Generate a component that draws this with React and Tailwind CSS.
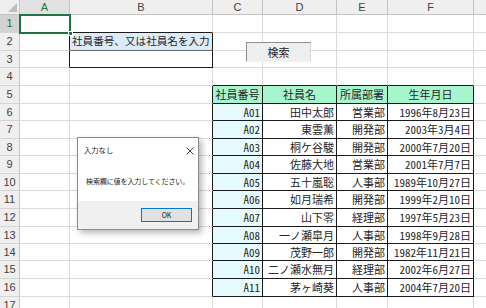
import React from 'react';

const COLS = [
  { key: 'A', w: 'w-[50px]' },
  { key: 'B', w: 'w-[143px]' },
  { key: 'C', w: 'w-[50px]' },
  { key: 'D', w: 'w-[74px]' },
  { key: 'E', w: 'w-[51px]' },
  { key: 'F', w: 'w-[86px]' },
  { key: 'G', w: 'w-[64px]' },
];

const ROW_H = [
  'h-[18px]', 'h-[18px]', 'h-[17px]', 'h-[18px]', 'h-[18px]', 'h-[17px]',
  'h-[18px]', 'h-[17px]', 'h-[18px]', 'h-[17px]', 'h-[18px]', 'h-[18px]',
  'h-[17px]', 'h-[17px]', 'h-[18px]', 'h-[18px]', 'h-[18px]',
];

const HEAD = ['社員番号', '社員名', '所属部署', '生年月日'];

const staff = [
  ['A01', '田中太郎', '営業部', '1996年8月23日'],
  ['A02', '東雲薫', '開発部', '2003年3月4日'],
  ['A03', '桐ケ谷駿', '開発部', '2000年7月20日'],
  ['A04', '佐藤大地', '営業部', '2001年7月7日'],
  ['A05', '五十嵐聡', '人事部', '1989年10月27日'],
  ['A06', '如月瑞希', '開発部', '1999年2月10日'],
  ['A07', '山下零', '経理部', '1997年5月23日'],
  ['A08', '一ノ瀬皐月', '人事部', '1998年9月28日'],
  ['A09', '茂野一郎', '開発部', '1982年11月21日'],
  ['A10', '二ノ瀬水無月', '経理部', '2002年6月27日'],
  ['A11', '茅ヶ崎葵', '人事部', '2004年7月20日'],
];

const inTable = (r, c) => r >= 5 && r <= 16 && c >= 2 && c <= 5;

const Cell = ({ r, c, w }) => {
  let text = '';
  let align = 'justify-end pr-[2px]';
  let bg = 'bg-white';
  let extra = '';

  if (r === 2 && c === 1) {
    text = '社員番号、又は社員名を入力';
    align = 'justify-start pl-[2px]';
    bg = 'bg-[#ddebf7]';
    extra = 'text-[10.6px]';
  }
  if (r === 5 && inTable(r, c)) {
    text = HEAD[c - 2];
    align = 'justify-center';
    bg = 'bg-[#a6f5cd]';
  }
  if (r >= 6 && inTable(r, c)) {
    text = staff[r - 6][c - 2];
    if (c === 2) bg = 'bg-[#e6fbfd]';
    if (c === 2 || c === 5) extra = "[font-feature-settings:'hwid']";
  }

  const rightBlack =
    inTable(r, c) ||
    (r >= 5 && r <= 16 && c === 1) ||
    ((r === 2 || r === 3) && (c === 0 || c === 1));
  const bottomBlack =
    inTable(r, c) ||
    (r === 4 && c >= 2 && c <= 5) ||
    (c === 1 && (r === 1 || r === 3));

  let bottom = bottomBlack ? 'border-b-[#1a1a1a]' : 'border-b-[#dadada]';
  if (r === 2 && c === 1) bottom = 'border-b-[#6b6b6b]';

  return (
    <div
      className={`${w} shrink-0 flex items-center overflow-hidden whitespace-nowrap border-r border-b ${
        rightBlack ? 'border-r-[#1a1a1a]' : 'border-r-[#dadada]'
      } ${bottom} ${bg} ${align} ${extra}`}
    >
      {text}
    </div>
  );
};

const App = () => {
  return (
    <div className="relative w-[486px] h-[308px] overflow-hidden bg-white font-['Noto_Sans_CJK_JP',sans-serif] text-[11px] text-[#262626] leading-none">
      {/* column headers */}
      <div className="flex h-[15px]">
        <div className="relative w-[20px] shrink-0 bg-[#efefef] border-r border-b border-[#c4c4c4]">
          <svg className="absolute right-[2px] bottom-[2px]" width="9" height="9" viewBox="0 0 9 9">
            <polygon points="9,0 9,9 0,9" fill="#bdbdbd" />
          </svg>
        </div>
        {COLS.map((col) => (
          <div
            key={col.key}
            className={`${col.w} shrink-0 flex items-center justify-center border-r border-b border-[#c4c4c4] font-['Liberation_Sans',sans-serif] text-[11px] ${
              col.key === 'A' ? 'bg-[#e1e1e1] text-[#217346] border-b-[#217346]' : 'bg-[#efefef] text-[#444]'
            }`}
          >
            {col.key === 'G' ? '' : col.key}
          </div>
        ))}
      </div>

      {/* rows */}
      {ROW_H.map((h, i) => {
        const r = i + 1;
        return (
          <div key={r} className={`flex ${h}`}>
            <div
              className={`w-[20px] shrink-0 flex items-center justify-center border-r border-b border-b-[#d4d4d4] font-['Liberation_Sans',sans-serif] text-[11px] ${
                r === 1 ? 'bg-[#d2d2d2] text-[#217346] border-r-[#217346]' : 'bg-[#efefef] text-[#444] border-r-[#c4c4c4]'
              }`}
            >
              {r}
            </div>
            {COLS.map((col, c) => (
              <Cell key={col.key} r={r} c={c} w={col.w} />
            ))}
          </div>
        );
      })}

      {/* active cell A1 */}
      <div className="absolute left-[19px] top-[14px] w-[52px] h-[20px] border-2 border-[#217346]" />
      <div className="absolute left-[68px] top-[31px] w-[5px] h-[5px] bg-[#217346] border border-white" />

      {/* search button */}
      <div className="absolute left-[246px] top-[42px] w-[65px] h-[20px] flex items-center justify-center bg-[#efefef] border-t border-l border-t-[#8f8f8f] border-l-[#8f8f8f] border-r border-b border-r-[#d8d8d8] border-b-[#f4f4f4] text-[11px] text-[#222]">
        検索
      </div>

      {/* message box */}
      <div className="absolute left-[77px] top-[137px] w-[122px] h-[93px] flex flex-col bg-white border border-[#8a8a8a] shadow-[3px_3px_6px_rgba(0,0,0,0.28)] text-[7px] text-[#1a1a1a]">
        <div className="flex items-center justify-between h-[25px] pl-[6px] pr-[4px] text-[7.3px]">
          <span>入力なし</span>
          <svg width="8" height="8" viewBox="0 0 8 8">
            <path d="M0.5 0.5L7.5 7.5M7.5 0.5L0.5 7.5" stroke="#333" strokeWidth="0.9" />
          </svg>
        </div>
        <div className="flex-1 flex items-center pl-[8px] pb-[2px] tracking-[-0.1px]">検索欄に値を入力してください。</div>
        <div className="h-[28px] bg-[#f0f0f0] flex items-center justify-end pr-[6px]">
          <div className="w-[51px] h-[14px] flex items-center justify-center bg-[#e1e1e1] border border-[#0078d7] text-[7px]">
            OK
          </div>
        </div>
      </div>
    </div>
  );
};

export default App;
